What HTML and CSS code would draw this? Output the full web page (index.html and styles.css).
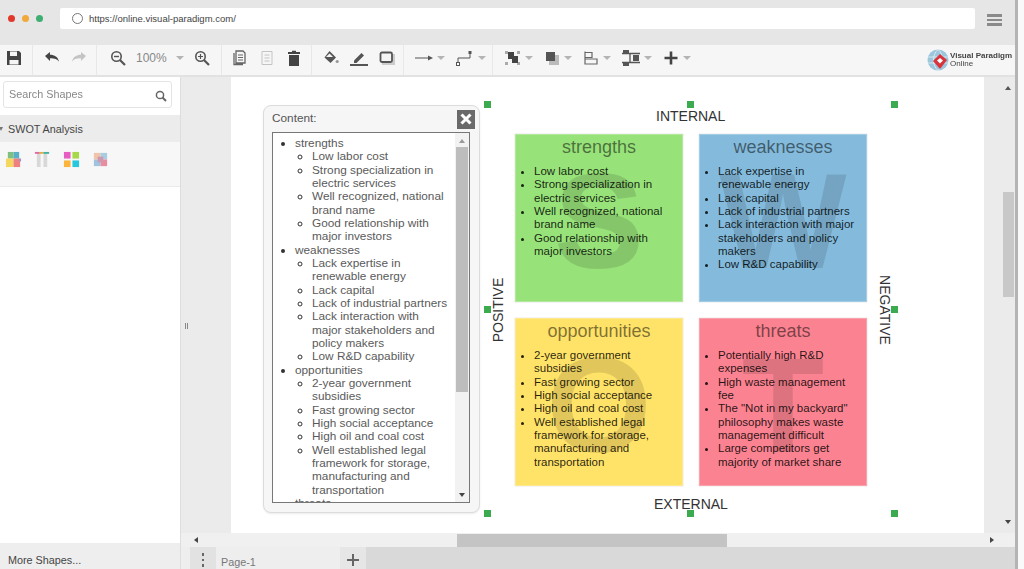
FILE: index.html
```html
<!DOCTYPE html>
<html lang="en">
<head>
<meta charset="utf-8">
<title>SWOT Analysis - Visual Paradigm Online</title>
<link rel="stylesheet" href="styles.css">
</head>
<body>
<div class="window">
  <header class="topbar">
    <div class="lights"><span class="light red"></span><span class="light amber"></span><span class="light green"></span></div>
    <div class="address">
      <span class="reload"></span>
      <span class="url">https://online.visual-paradigm.com/</span>
    </div>
    <div class="burger"><span></span><span></span><span></span></div>
  </header>

  <nav class="toolbar">
    <div class="group g-file">
      <svg class="ico" viewBox="0 0 16 16"><path fill="#444" d="M1 1h12l2 2v12H1z"/><path fill="#f5f5f5" d="M4 1.500h7v4.500H4zM3.500 10h9v4.500h-9z"/></svg>
    </div>
    <div class="group g-undo">
      <svg class="ico" viewBox="0 0 16 16"><path fill="#444" d="M1 6l5-4v2.800c4.500 0 8 2 9 7-2-2.800-5-3.600-9-3.400V11z"/></svg>
      <svg class="ico" viewBox="0 0 16 16"><path fill="#c4c4c4" d="M15 6l-5-4v2.800c-4.500 0-8 2-9 7 2-2.800 5-3.600 9-3.400V11z"/></svg>
    </div>
    <div class="group g-zoom">
      <svg class="ico" viewBox="0 0 16 16"><circle cx="6.500" cy="6.500" r="4.700" fill="none" stroke="#555" stroke-width="1.600"/><path stroke="#555" stroke-width="2.200" d="M10 10l5 5"/><path stroke="#555" stroke-width="1.400" d="M4 6.500h5"/></svg>
      <span class="zoomval">100%</span>
      <span class="caret"></span>
      <svg class="ico" viewBox="0 0 16 16"><circle cx="6.500" cy="6.500" r="4.700" fill="none" stroke="#555" stroke-width="1.600"/><path stroke="#555" stroke-width="2.200" d="M10 10l5 5"/><path stroke="#555" stroke-width="1.200" d="M4 6.500h5M6.500 4v5"/></svg>
    </div>
    <div class="group g-edit">
      <svg class="ico" viewBox="0 0 16 16"><path fill="none" stroke="#666" stroke-width="1.300" d="M2 3v11.500h9M4 1h7l2 2v10H4z"/><path stroke="#666" d="M6 5h5M6 7.500h5M6 10h5"/></svg>
      <svg class="ico" viewBox="0 0 16 16"><path fill="none" stroke="#c4c4c4" d="M3 1.500h10v13H3z"/><path stroke="#c4c4c4" d="M5.500 5h5M5.500 8h5M5.500 11h5"/></svg>
      <svg class="ico" viewBox="0 0 16 16"><path fill="#444" d="M2 2h4V.800h4V2h4v2H2zM3 5h10v11H3z"/></svg>
    </div>
    <div class="group g-style">
      <svg class="ico" viewBox="0 0 16 16"><path fill="#555" d="M6.500 1L13 7.500 7.500 13 1.500 7.500z"/><path fill="#f5f5f5" d="M6.500 3.500l3.500 3.500H3z"/><circle cx="14.200" cy="11.500" r="1.600" fill="#999"/></svg>
      <svg class="ico wide" viewBox="0 0 18 16"><path fill="#555" d="M4 10.500L11.500 3l2.500 2.500-7.500 7.500H4z"/><path fill="#555" d="M0 14h18v2H0z"/></svg>
      <svg class="ico" viewBox="0 0 16 16"><path fill="#ccc" d="M3 4h13v11H3z"/><rect x="1.500" y="2.500" width="11.500" height="9.500" rx="1.500" fill="#f5f5f5" stroke="#555" stroke-width="1.800"/></svg>
    </div>
    <div class="group g-line">
      <div class="drop">
        <svg class="ico wide" viewBox="0 0 18 16"><path stroke="#555" stroke-width="1" d="M0 8h14"/><path fill="#555" d="M13 5.500l5 2.500-5 2.500z"/></svg>
        <span class="caret"></span>
      </div>
      <div class="drop">
        <svg class="ico wide" viewBox="0 0 18 16"><path fill="none" stroke="#555" stroke-width="1" d="M2 14V8h12V3"/><rect x="12.500" y="1" width="3" height="3" fill="#555"/><rect x="0.500" y="12.500" width="3" height="3" fill="#fff" stroke="#555"/></svg>
        <span class="caret"></span>
      </div>
    </div>
    <div class="group g-arrange">
      <div class="drop">
        <svg class="ico" viewBox="0 0 16 16"><path fill="#aaa" d="M0 1h3v3H0zM12 1h3v3h-3zM0 12h3v3H0zM12 12h3v3h-3z"/><path fill="#444" d="M3 2h6v4h4v7H7V9H3z"/></svg>
        <span class="caret"></span>
      </div>
      <div class="drop">
        <svg class="ico" viewBox="0 0 16 16"><path fill="#bbb" d="M5 5h10v10H5z"/><path fill="#555" d="M2 2h9v9H2z"/></svg>
        <span class="caret"></span>
      </div>
      <div class="drop">
        <svg class="ico" viewBox="0 0 16 16"><path fill="none" stroke="#666" stroke-width="1.200" d="M2 1.500v13M2 2.500h7v5H2M2 9h12v5H2"/></svg>
        <span class="caret"></span>
      </div>
      <div class="drop">
        <svg class="ico wide" viewBox="0 0 18 16"><path fill="#555" d="M1 0h6v3H1zM1 13h6v3H1zM11 5h6v6h-6z"/><path stroke="#555" stroke-width="1.300" d="M0 3.500h18M0 12.500h18M8 3.500v9"/></svg>
        <span class="caret"></span>
      </div>
      <div class="drop">
        <svg class="ico" viewBox="0 0 16 16"><path fill="#444" d="M6.700 1.500h2.600v5.200h5.200v2.600H9.300v5.200H6.700V9.300H1.500V6.700h5.200z"/></svg>
        <span class="caret"></span>
      </div>
    </div>
    <div class="brand">
      <svg class="globe" viewBox="0 0 22 22"><circle cx="11" cy="11" r="10.500" fill="#9cc6dc"/><path fill="none" stroke="#e4f0f6" stroke-width=".8" d="M1 8h20M1 14h20M11 .500c-6 5-6 16 0 21M11 .500c6 5 6 16 0 21"/><path fill="#d8343c" d="M13 5l7 6-7 9-7-8z"/><path fill="#fff" d="M13 9l3 2.500-3 3-3-3z"/></svg>
      <div class="brandtext"><span class="b1">Visual Paradigm</span><span class="b2">Online</span></div>
    </div>
  </nav>

  <div class="main">
    <aside class="sidebar">
      <div class="search">
        <span class="searchtext">Search Shapes</span>
        <svg class="searchico" viewBox="0 0 12 12"><circle cx="5" cy="5" r="3.600" fill="none" stroke="#666" stroke-width="1.500"/><path stroke="#666" stroke-width="2" d="M7.500 7.500l3.500 3.500"/></svg>
      </div>
      <div class="sec-head"><span class="sec-caret"></span>SWOT Analysis</div>
      <div class="sec-body">
        <svg class="thumb" viewBox="0 0 18 18"><path fill="#7fbf7f" d="M3 1h6v7H3z"/><path fill="#58b0c8" d="M9 1h6v7H9z"/><path fill="#f5d65e" d="M1 8h8v9H1z"/><path fill="#ee8080" d="M9 8h7v9H9z"/><path fill="#9a8fd0" d="M15 8h2v3h-2z"/></svg>
        <svg class="thumb" viewBox="0 0 18 18"><path fill="#d8d8d8" d="M3 2h4v15H3zM10 2h4v15h-4z"/><path fill="#e06a9a" d="M1 1h5v2H1z"/><path fill="#e0b040" d="M6 1h4v2H6z"/><path fill="#40b0a0" d="M10 1h6v2h-6z"/></svg>
        <svg class="thumb" viewBox="0 0 18 18"><path fill="#e65fc0" d="M1 1h7v7H1z"/><path fill="#a7d848" d="M10 1h7v7h-7z"/><path fill="#fbb53a" d="M1 10h7v7H1z"/><path fill="#25c8dc" d="M10 10h7v7h-7z"/></svg>
        <svg class="thumb" viewBox="0 0 18 18"><path fill="#f0c4a8" d="M2 2h7v7H2z"/><path fill="#a8cce0" d="M9 2h7v7H9z"/><path fill="#a0c4e0" d="M2 9h7v7H2z"/><path fill="#e88ca0" d="M9 9h7v7H9z"/><path fill="#d098b0" d="M6 6h6v6H6z"/></svg>
      </div>
      <div class="sec-fill"></div>
      <div class="more">More Shapes...</div>
    </aside>

    <section class="workspace">
      <div class="canvas-row">
        <div class="gutter"><span class="grip"></span></div>
        <div class="page">
          <div class="dialog">
            <div class="dialog-head">
              <span class="dialog-title">Content:</span>
              <span class="close">
                <svg viewBox="0 0 12 12" class="closeico"><path stroke="#fff" stroke-width="3" d="M1.500 1.500l9 9M10.500 1.500l-9 9"/></svg>
              </span>
            </div>
            <div class="listbox">
              <div class="listscroll">
                <ul class="outer">
                  <li>strengths
                    <ul>
                      <li>Low labor cost</li>
                      <li>Strong specialization in electric services</li>
                      <li>Well recognized, national brand name</li>
                      <li>Good relationship with major investors</li>
                    </ul>
                  </li>
                  <li>weaknesses
                    <ul>
                      <li>Lack expertise in renewable energy</li>
                      <li>Lack capital</li>
                      <li>Lack of industrial partners</li>
                      <li>Lack interaction with major stakeholders and policy makers</li>
                      <li>Low R&amp;D capability</li>
                    </ul>
                  </li>
                  <li>opportunities
                    <ul>
                      <li>2-year government subsidies</li>
                      <li>Fast growing sector</li>
                      <li>High social acceptance</li>
                      <li>High oil and coal cost</li>
                      <li>Well established legal framework for storage, manufacturing and transportation</li>
                    </ul>
                  </li>
                  <li>threats</li>
                </ul>
              </div>
              <div class="vbar vbar-list">
                <span class="arrow up"></span>
                <span class="thumbbar list-thumb"></span>
                <span class="arrow down"></span>
              </div>
            </div>
          </div>

          <div class="label internal">INTERNAL</div>
          <div class="label external">EXTERNAL</div>
          <div class="label positive">POSITIVE</div>
          <div class="label negative">NEGATIVE</div>

          <div class="matrix">
            <div class="quad q-s">
              <span class="mark">S</span>
              <h2>strengths</h2>
              <ul>
                <li>Low labor cost</li>
                <li>Strong specialization in electric services</li>
                <li>Well recognized, national brand name</li>
                <li>Good relationship with major investors</li>
              </ul>
            </div>
            <div class="quad q-w">
              <span class="mark">W</span>
              <h2>weaknesses</h2>
              <ul>
                <li>Lack expertise in renewable energy</li>
                <li>Lack capital</li>
                <li>Lack of industrial partners</li>
                <li>Lack interaction with major stakeholders and policy makers</li>
                <li>Low R&amp;D capability</li>
              </ul>
            </div>
            <div class="quad q-o">
              <span class="mark">O</span>
              <h2>opportunities</h2>
              <ul>
                <li>2-year government subsidies</li>
                <li>Fast growing sector</li>
                <li>High social acceptance</li>
                <li>High oil and coal cost</li>
                <li>Well established legal framework for storage, manufacturing and transportation</li>
              </ul>
            </div>
            <div class="quad q-t">
              <span class="mark">T</span>
              <h2>threats</h2>
              <ul>
                <li>Potentially high R&amp;D expenses</li>
                <li>High waste management fee</li>
                <li>The "Not in my backyard" philosophy makes waste management difficult</li>
                <li>Large competitors get majority of market share</li>
              </ul>
            </div>
          </div>

          <span class="handle h-tl"></span><span class="handle h-tc"></span><span class="handle h-tr"></span>
          <span class="handle h-ml"></span><span class="handle h-mr"></span>
          <span class="handle h-bl"></span><span class="handle h-bc"></span><span class="handle h-br"></span>
        </div>
        <div class="page-gap"></div>
        <div class="vbar vbar-main">
          <span class="arrow up"></span>
          <span class="thumbbar main-thumb"></span>
          <span class="arrow down"></span>
        </div>
      </div>
      <div class="hscroll">
        <span class="arrow left"></span>
        <span class="hthumb"></span>
        <span class="arrow right"></span>
      </div>
      <div class="tabbar">
        <span class="tab-gutter"></span>
        <span class="tab-menu"><i></i><i></i><i></i></span>
        <span class="tab">Page-1</span>
        <span class="tab-add">
          <svg viewBox="0 0 12 12" class="addico"><path stroke="#666" stroke-width="2" d="M6 0v12M0 6h12"/></svg>
        </span>
      </div>
    </section>
  </div>
</div>
<div class="edge"></div>
</body>
</html>
```

FILE: styles.css
```css
* { box-sizing: border-box; }
html, body { margin: 0; height: 100%; }
body {
  display: flex;
  width: 1024px;
  height: 569px;
  overflow: hidden;
  background: #f9f9f9;
  font-family: "Liberation Sans", Arial, sans-serif;
  color: #444;
  padding-right: 6px;
}
.window {
  flex: 1;
  min-width: 0;
  display: flex;
  flex-direction: column;
  filter: blur(0.4px);
}
.edge { width: 3px; background: #b4b4b4; }

/* browser bar */
.topbar {
  height: 45px;
  flex: none;
  background: #e6e6e6;
  display: flex;
  padding: 8px 0 0 8px;
  align-items: flex-start;
}
.lights { display: flex; gap: 7px; margin-top: 7px; width: 52px; }
.light { width: 7px; height: 7px; border-radius: 50%; }
.red { background: #e0392b; }
.amber { background: #f2a93b; }
.green { background: #3fae72; }
.address {
  width: 915px;
  height: 21px;
  background: #fff;
  border-radius: 2px;
  display: flex;
  align-items: center;
  padding-left: 12px;
  gap: 6px;
}
.reload { width: 11px; height: 11px; border: 1.500px solid #777; border-radius: 50%; }
.url { font-size: 9.500px; color: #444; }
.burger { margin: 6px 0 0 12px; width: 15px; display: flex; flex-direction: column; gap: 2px; }
.burger span { height: 2.500px; background: #8a8a8a; }

/* toolbar */
.toolbar {
  height: 32px;
  flex: none;
  background: #f6f6f6;
  border-bottom: 2px solid #e2e2e2;
  display: flex;
}
.group {
  display: flex;
  align-items: center;
  height: 30px;
  border-right: 1px solid #e8e8e8;
  gap: 11px;
  padding-left: 11px;
  padding-bottom: 5px;
}
.g-file { width: 33px; padding-left: 6px; }
.g-undo { width: 64px; }
.g-zoom { width: 125px; padding-left: 13px; gap: 10px; }
.g-edit { width: 90px; padding-left: 10px; }
.g-style { width: 92px; }
.g-line { width: 89px; }
.g-arrange { border-right: 0; padding-left: 12px; }
.ico { width: 16px; height: 16px; flex: none; display: block; }
.ico.wide { width: 18px; }
.drop { display: flex; align-items: center; gap: 4px; }
.caret {
  width: 0; height: 0;
  border-left: 4px solid transparent;
  border-right: 4px solid transparent;
  border-top: 4px solid #b4b4b4;
}
.zoomval { font-size: 12px; color: #888; width: 30px; }
.brand { margin-left: auto; display: flex; align-items: center; width: 88px; gap: 1px; height: 30px; }
.globe { width: 22px; height: 22px; flex: none; }
.brandtext { display: flex; flex-direction: column; line-height: 8px; font-size: 8px; color: #444; font-weight: bold; }
.b1 { white-space: nowrap; }
.b2 { font-weight: normal; }

/* main */
.main { flex: 1; min-height: 0; display: flex; }
.sidebar {
  width: 181px;
  flex: none;
  background: #fff;
  border-right: 1px solid #ddd;
  display: flex;
  flex-direction: column;
  padding-top: 4px;
}
.search {
  margin-left: 3px;
  width: 169px;
  height: 27px;
  background: #fff;
  border: 1px solid #e4e4e4;
  border-radius: 3px;
  display: flex;
  align-items: center;
  justify-content: space-between;
  padding: 0 4px 0 5px;
  flex: none;
}
.searchtext { font-size: 10.800px; color: #888; margin-top: -2px; }
.searchico { width: 12px; height: 12px; margin-top: 2px; }
.sec-head {
  margin-top: 7px;
  height: 27px;
  flex: none;
  background: #ececec;
  font-size: 10.800px;
  color: #444;
  display: flex;
  align-items: center;
  gap: 5px;
}
.sec-caret {
  width: 0; height: 0;
  border-left: 2.500px solid transparent;
  border-right: 2.500px solid transparent;
  border-top: 4px solid #777;
  margin-left: -1px;
}
.sec-body {
  height: 45px;
  flex: none;
  background: #f7f7f7;
  border-bottom: 1px solid #eaeaea;
  display: flex;
  align-items: flex-start;
  gap: 12px;
  padding: 9px 0 0 5px;
}
.thumb { width: 17px; height: 17px; }
.sec-fill { flex: 1; }
.more {
  height: 26px;
  flex: none;
  background: #eeeeee;
  font-size: 10.800px;
  color: #444;
  padding: 10px 0 0 8px;
  line-height: 14px;
}

.workspace { flex: 1; min-width: 0; display: flex; flex-direction: column; }
.canvas-row { flex: 1; min-height: 0; display: flex; background: #ebebeb; }
.gutter { width: 50px; flex: none; position: relative; }
.grip {
  position: absolute;
  left: 4px; top: 246px;
  width: 3px; height: 6px;
  border-left: 1px solid #888;
  border-right: 1px solid #888;
}
.page { width: 753px; flex: none; background: #fff; position: relative; overflow: hidden; }
.page-gap { flex: 1; }
.vbar { display: flex; flex-direction: column; align-items: center; flex: none; }
.vbar-main { width: 14px; }
.main-thumb { width: 11px; height: 105px; margin-top: 102px; background: #c8c8c8; }
.vbar-main .arrow.up { margin-top: 9px; }
.vbar-main .arrow.down { margin-top: auto; margin-bottom: 9px; }
.arrow { width: 0; height: 0; flex: none; display: block; }
.arrow.up { border-left: 3.500px solid transparent; border-right: 3.500px solid transparent; border-bottom: 4px solid #555; }
.arrow.down { border-left: 3.500px solid transparent; border-right: 3.500px solid transparent; border-top: 4px solid #444; }
.arrow.left { border-top: 3.500px solid transparent; border-bottom: 3.500px solid transparent; border-right: 4px solid #444; }
.arrow.right { border-top: 3.500px solid transparent; border-bottom: 3.500px solid transparent; border-left: 4px solid #444; }

/* dialog */
.dialog {
  position: absolute;
  left: 32px; top: 28px;
  width: 217px; height: 408px;
  background: #f6f6f6;
  border: 1px solid #dcdcdc;
  border-radius: 8px;
  padding: 0 8px;
  box-shadow: 0 1px 2px rgba(0,0,0,.08);
  display: flex;
  flex-direction: column;
}
.dialog-head { height: 26px; flex: none; display: flex; align-items: center; justify-content: space-between; margin-right: -4px; }
.dialog-title { font-size: 11.800px; color: #555; margin-bottom: 2px; }
.close { width: 18px; height: 19px; background: #6a6a6a; display: flex; align-items: center; justify-content: center; }
.closeico { width: 12px; height: 12px; }
.listbox {
  width: 198px;
  height: 371px;
  background: #fff;
  border: 1px solid #777;
  display: flex;
  overflow: hidden;
}
.listscroll { flex: 1; min-width: 0; overflow: hidden; padding-right: 6px; }
.outer { margin: 4px 0 0; padding: 0 0 0 22px; font-size: 11.800px; line-height: 13.330px; color: #5a5a5a; }
.outer ul { margin: 0; padding: 0 0 0 17px; list-style: circle; }
.outer li::marker { color: #333; }
.vbar-list { width: 14px; background: #f2f2f2; }
.vbar-list .arrow.up { margin-top: 6px; border-bottom-color: #999; }
.list-thumb { width: 12px; height: 245px; margin-top: 4px; background: #bdbdbd; }
.vbar-list .arrow.down { margin-top: auto; margin-bottom: 5px; }

/* diagram */
.label { position: absolute; font-size: 14px; color: #333; line-height: 16px; white-space: nowrap; }
.internal { left: 425px; top: 31px; }
.external { left: 423px; top: 419px; }
.positive { left: 235px; top: 225px; transform: rotate(-90deg); }
.negative { left: 619px; top: 225px; transform: rotate(90deg); }
.matrix {
  position: absolute;
  left: 284px; top: 57px;
  display: grid;
  grid-template-columns: 168px 168px;
  grid-template-rows: 168px 168px;
  gap: 16px;
}
.quad { position: relative; overflow: hidden; border: 1px solid rgba(255,255,255,.25); box-shadow: 0 0 1px rgba(0,0,0,.25); }
.q-s { background: #98e27a; }
.q-w { background: #84bbdc; }
.q-o { background: #ffe268; }
.q-t { background: #fb8391; }
.mark {
  position: absolute;
  left: 0; right: 0; top: 12px;
  text-align: center;
  font-size: 135px;
  font-weight: bold;
  line-height: 150px;
  color: rgba(0,0,0,.12);
}
.quad h2 {
  position: relative;
  margin: 0;
  text-align: center;
  font-size: 18px;
  font-weight: normal;
  line-height: 22px;
  padding-top: 1px;
  color: rgba(0,0,0,.52);
}
.quad ul {
  position: relative;
  margin: 7px 0 0;
  padding: 0 8px 0 18px;
  font-size: 11.500px;
  line-height: 13.330px;
  color: rgba(0,0,0,.85);
}
.handle { position: absolute; width: 7px; height: 7px; background: #3cab4f; }
.h-tl { left: 253px; top: 24px; }
.h-tc { left: 456px; top: 24px; }
.h-tr { left: 660px; top: 24px; }
.h-ml { left: 253px; top: 229px; }
.h-mr { left: 660px; top: 229px; }
.h-bl { left: 253px; top: 433px; }
.h-bc { left: 456px; top: 433px; }
.h-br { left: 660px; top: 433px; }

/* bottom bars */
.hscroll { height: 14px; flex: none; background: #f0f0f0; display: flex; align-items: center; padding-left: 13px; }
.hthumb { width: 270px; height: 13px; margin-left: 259px; background: #c4c4c4; }
.hscroll .arrow.right { margin-left: 263px; }
.tabbar { height: 22px; flex: none; background: #d9d9d9; display: flex; }
.tab-gutter { width: 9px; background: #eee; }
.tab-menu { width: 26px; background: #e2e2e2; display: flex; flex-direction: column; align-items: center; justify-content: center; gap: 3px; padding-top: 4px; }
.tab-menu i { width: 2.500px; height: 2.500px; background: #666; display: block; }
.tab { width: 124px; background: #eeeeee; font-size: 10.800px; color: #777; padding: 9px 0 0 5px; line-height: 13px; }
.tab-add { width: 26px; background: #e6e6e6; display: flex; align-items: center; justify-content: center; padding-top: 4px; }
.addico { width: 12px; height: 12px; }
```
